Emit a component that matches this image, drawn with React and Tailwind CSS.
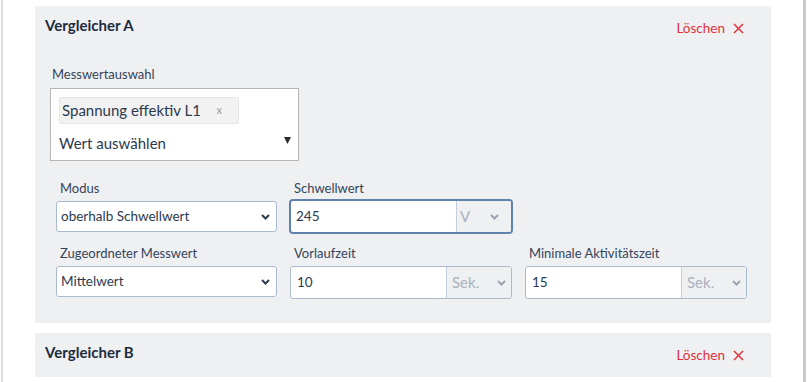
import React from 'react';

const font = { fontFamily: 'Lato, "Open Sans", sans-serif' };

const Chevron = ({ className = '' }) => (
  <svg width="9" height="6" viewBox="0 0 9 6" className={className}>
    <polyline points="1,1 4.5,4.5 8,1" fill="none" stroke="currentColor" strokeWidth="2" />
  </svg>
);

const CloseX = () => (
  <svg width="11" height="11" viewBox="0 0 11 11" className="text-[#e0313b]">
    <path d="M1 1 L10 10 M10 1 L1 10" stroke="currentColor" strokeWidth="1.5" fill="none" />
  </svg>
);

const CardHeader = ({ title }) => (
  <div className="flex h-[22px] items-start justify-between pr-[27px]">
    <h3 className="h-[22px] text-[15px] leading-[22px] font-bold text-[#1d2b3f]">{title}</h3>
    <button className="mt-[3px] flex h-[22px] items-center gap-[8px] text-[13.5px] text-[#e0313b]">
      <span>Löschen</span>
      <CloseX />
    </button>
  </div>
);

const Label = ({ children }) => (
  <div className="h-[20px] pl-[4px] text-[13px] leading-[20px] text-[#34445a]">{children}</div>
);

const SelectBox = ({ value }) => (
  <div className="mt-[3px] flex h-[31px] items-center justify-between rounded-[3px] border border-[#a9bbd1] bg-white pl-[4px] pr-[6px] text-[13.5px] text-[#2a3a4f]">
    <span>{value}</span>
    <Chevron className="text-[#2c3e50]" />
  </div>
);

const SekGroup = ({ value }) => (
  <div className="mt-[3px] flex h-[33px] overflow-hidden rounded-[3px] border border-[#a9bbd1] bg-white">
    <div className="flex flex-1 items-center pl-[6px] text-[13.5px] text-[#2a3a4f]">{value}</div>
    <div className="flex w-[65px] items-center justify-between border-l border-[#c2cedc] bg-[#eff0f2] px-[5px] text-[15px] text-[#a9b2bd]">
      <span>Sek.</span>
      <Chevron className="text-[#9aa4b1]" />
    </div>
  </div>
);

export default function App() {
  return (
    <div className="min-h-[382px] bg-white" style={font}>
      <div className="ml-px min-h-[382px] w-[805px] border-l-2 border-r-[3px] border-l-[#dcdcdc] border-r-[#cacaca] px-[32px] pt-[6px]">
        {/* Vergleicher A */}
        <section className="h-[317px] bg-[#eff0f2] pl-[10px] pt-[8px]">
          <CardHeader title="Vergleicher A" />

          <div className="ml-[5px] mt-[28px]">
            <div className="h-[20px] pl-[2px] text-[13px] leading-[20px] text-[#34445a]">Messwertauswahl</div>
            <div className="mt-[4px] h-[73px] w-[249px] border border-[#b5b5b5] bg-white pl-[8px] pr-[7px] pt-[8px]">
              <div className="flex h-[27px] w-[180px] items-center justify-between rounded-[2px] border border-[#e6e6e6] bg-[#f2f2f2] pl-[2px] pr-[16px]">
                <span className="text-[15px] text-[#2a3a4f]">Spannung effektiv L1</span>
                <span className="text-[11px] text-[#9a9a9a]">x</span>
              </div>
              <div className="mt-[7px] flex h-[24px] items-center justify-between">
                <span className="text-[15px] text-[#2a3a4f]">Wert auswählen</span>
                <svg width="7" height="7" viewBox="0 0 7 7" className="mb-[6px]">
                  <path d="M0 0 H7 L3.5 7 Z" fill="#2b2b2b" />
                </svg>
              </div>
            </div>
          </div>

          <div className="ml-[11px] mt-[17px] flex flex-col gap-[11px]">
            <div className="grid h-[54px] grid-cols-[221px_222px_222px] gap-x-[13px]">
              <div>
                <Label>Modus</Label>
                <SelectBox value="oberhalb Schwellwert" />
              </div>
              <div>
                <Label>Schwellwert</Label>
                <div className="mt-[1px] -mx-px flex h-[35px] overflow-hidden rounded-[4px] border-2 border-[#5f82ab] bg-white">
                  <div className="flex flex-1 items-center pl-[5px] text-[13.5px] text-[#2a3a4f]">245</div>
                  <div className="flex w-[55px] items-center border-l border-[#c2cedc] bg-[#eff0f2] pl-[3px] text-[15px] text-[#a9b2bd]">
                    <span>V</span>
                    <Chevron className="ml-[20px] text-[#9aa4b1]" />
                  </div>
                </div>
              </div>
              <div />
            </div>

            <div className="grid h-[56px] grid-cols-[221px_222px_222px] gap-x-[13px]">
              <div>
                <Label>Zugeordneter Messwert</Label>
                <div className="mt-[1px]">
                  <SelectBox value="Mittelwert" />
                </div>
              </div>
              <div>
                <Label>Vorlaufzeit</Label>
                <SekGroup value="10" />
              </div>
              <div>
                <Label>Minimale Aktivitätszeit</Label>
                <SekGroup value="15" />
              </div>
            </div>
          </div>
        </section>

        {/* Vergleicher B */}
        <section className="mt-[10px] h-[44px] bg-[#eff0f2] pl-[10px] pt-[8px]">
          <CardHeader title="Vergleicher B" />
        </section>
      </div>
    </div>
  );
}
